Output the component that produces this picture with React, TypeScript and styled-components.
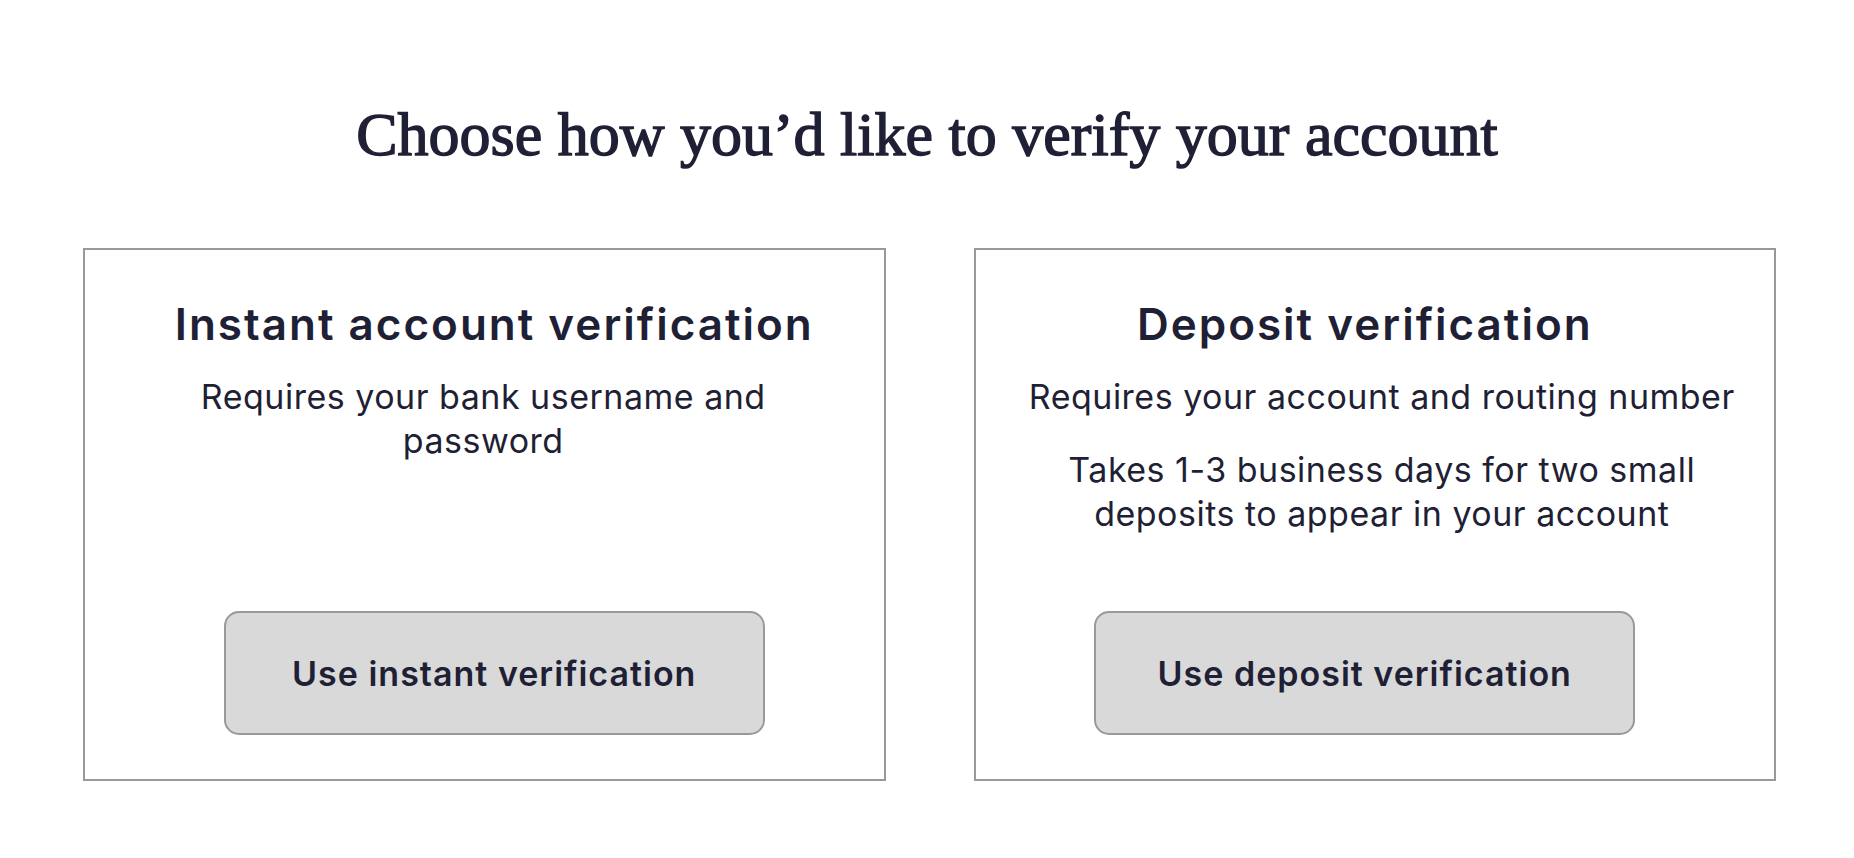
import React from 'react';
import styled, { createGlobalStyle } from 'styled-components';

// Two ways of verifying a bank account, each in its own card
interface VerifyOption {
  title: string;
  notes: string[];
  action: string;
  lean: number;
  noteLean: number;
}

const options: VerifyOption[] = [
  {
    title: 'Instant account verification',
    notes: ['Requires your bank username and password'],
    action: 'Use instant verification',
    lean: 10,
    noteLean: -1,
  },
  {
    title: 'Deposit verification',
    notes: [
      'Requires your account and routing number',
      'Takes 1-3 business days for two small deposits to appear in your account',
    ],
    action: 'Use deposit verification',
    lean: -10,
    noteLean: 7,
  },
];

const GlobalStyle = createGlobalStyle`
  html, body {
    margin: 0;
    padding: 0;
    background: #ffffff;
  }
  body {
    font-family: Inter, "Noto Sans", sans-serif;
    color: #1f1f35;
  }
`;

const Page = styled.main`
  display: flex;
  flex-direction: column;
  padding-top: 98px;
`;

const Title = styled.h1`
  margin: 0 0 78px;
  text-align: center;
  font-family: "Liberation Serif", "DejaVu Serif", serif;
  font-weight: 400;
  font-size: 62px;
  line-height: 72px;
  color: #1f1f35;
  -webkit-text-stroke: 1.4px #1f1f35;
`;

const Options = styled.section`
  display: grid;
  grid-template-columns: 1fr 1fr;
  gap: 88px;
  padding: 0 78px 0 83px;
`;

const Card = styled.article`
  box-sizing: border-box;
  height: 533px;
  border: 2px solid #999999;
  background: #ffffff;
  padding: 48px 30px 44px;
  display: flex;
  flex-direction: column;
  align-items: center;
  text-align: center;
`;

// a centred block pushed a few pixels to one side with uneven margins
const leanMargins = (lean: number) =>
  `margin-left: ${lean > 0 ? lean * 2 : 0}px; margin-right: ${lean < 0 ? -lean * 2 : 0}px;`;

const CardTitle = styled.h2<{ $lean: number }>`
  margin-top: 0;
  margin-bottom: 25px;
  ${({ $lean }) => leanMargins($lean)}
  font-size: 44px;
  line-height: 52px;
  font-weight: 600;
  letter-spacing: 2px;
  color: #1f1f35;
`;

const Note = styled.p<{ $lean: number }>`
  margin-top: 0;
  margin-bottom: 29px;
  ${({ $lean }) => leanMargins($lean)}
  max-width: 722px;
  font-size: 34px;
  line-height: 44px;
  font-weight: 400;
  letter-spacing: 0.5px;
  color: #1f1f35;

  &:last-of-type {
    margin-bottom: 0;
  }
`;

const ActionButton = styled.button<{ $lean: number }>`
  margin-top: auto;
  ${({ $lean }) => leanMargins($lean)}
  flex-shrink: 0;
  box-sizing: border-box;
  width: 541px;
  height: 124px;
  border: 2px solid #999999;
  border-radius: 15px;
  background: #d9d9d9;
  font-family: Inter, "Noto Sans", sans-serif;
  font-size: 34px;
  font-weight: 600;
  letter-spacing: 1px;
  color: #1f1f35;
  cursor: pointer;
`;

const OptionCard: React.FC<{ option: VerifyOption }> = ({ option }) => (
  <Card>
    <CardTitle $lean={option.lean}>{option.title}</CardTitle>
    {option.notes.map((note) => (
      <Note key={note} $lean={option.noteLean}>
        {note}
      </Note>
    ))}
    <ActionButton $lean={option.lean}>{option.action}</ActionButton>
  </Card>
);

const App: React.FC = () => {
  return (
    <>
      <GlobalStyle />
      <Page>
        <Title>Choose how you’d like to verify your account</Title>
        <Options>
          {options.map((option) => (
            <OptionCard key={option.title} option={option} />
          ))}
        </Options>
      </Page>
    </>
  );
};

export default App;
